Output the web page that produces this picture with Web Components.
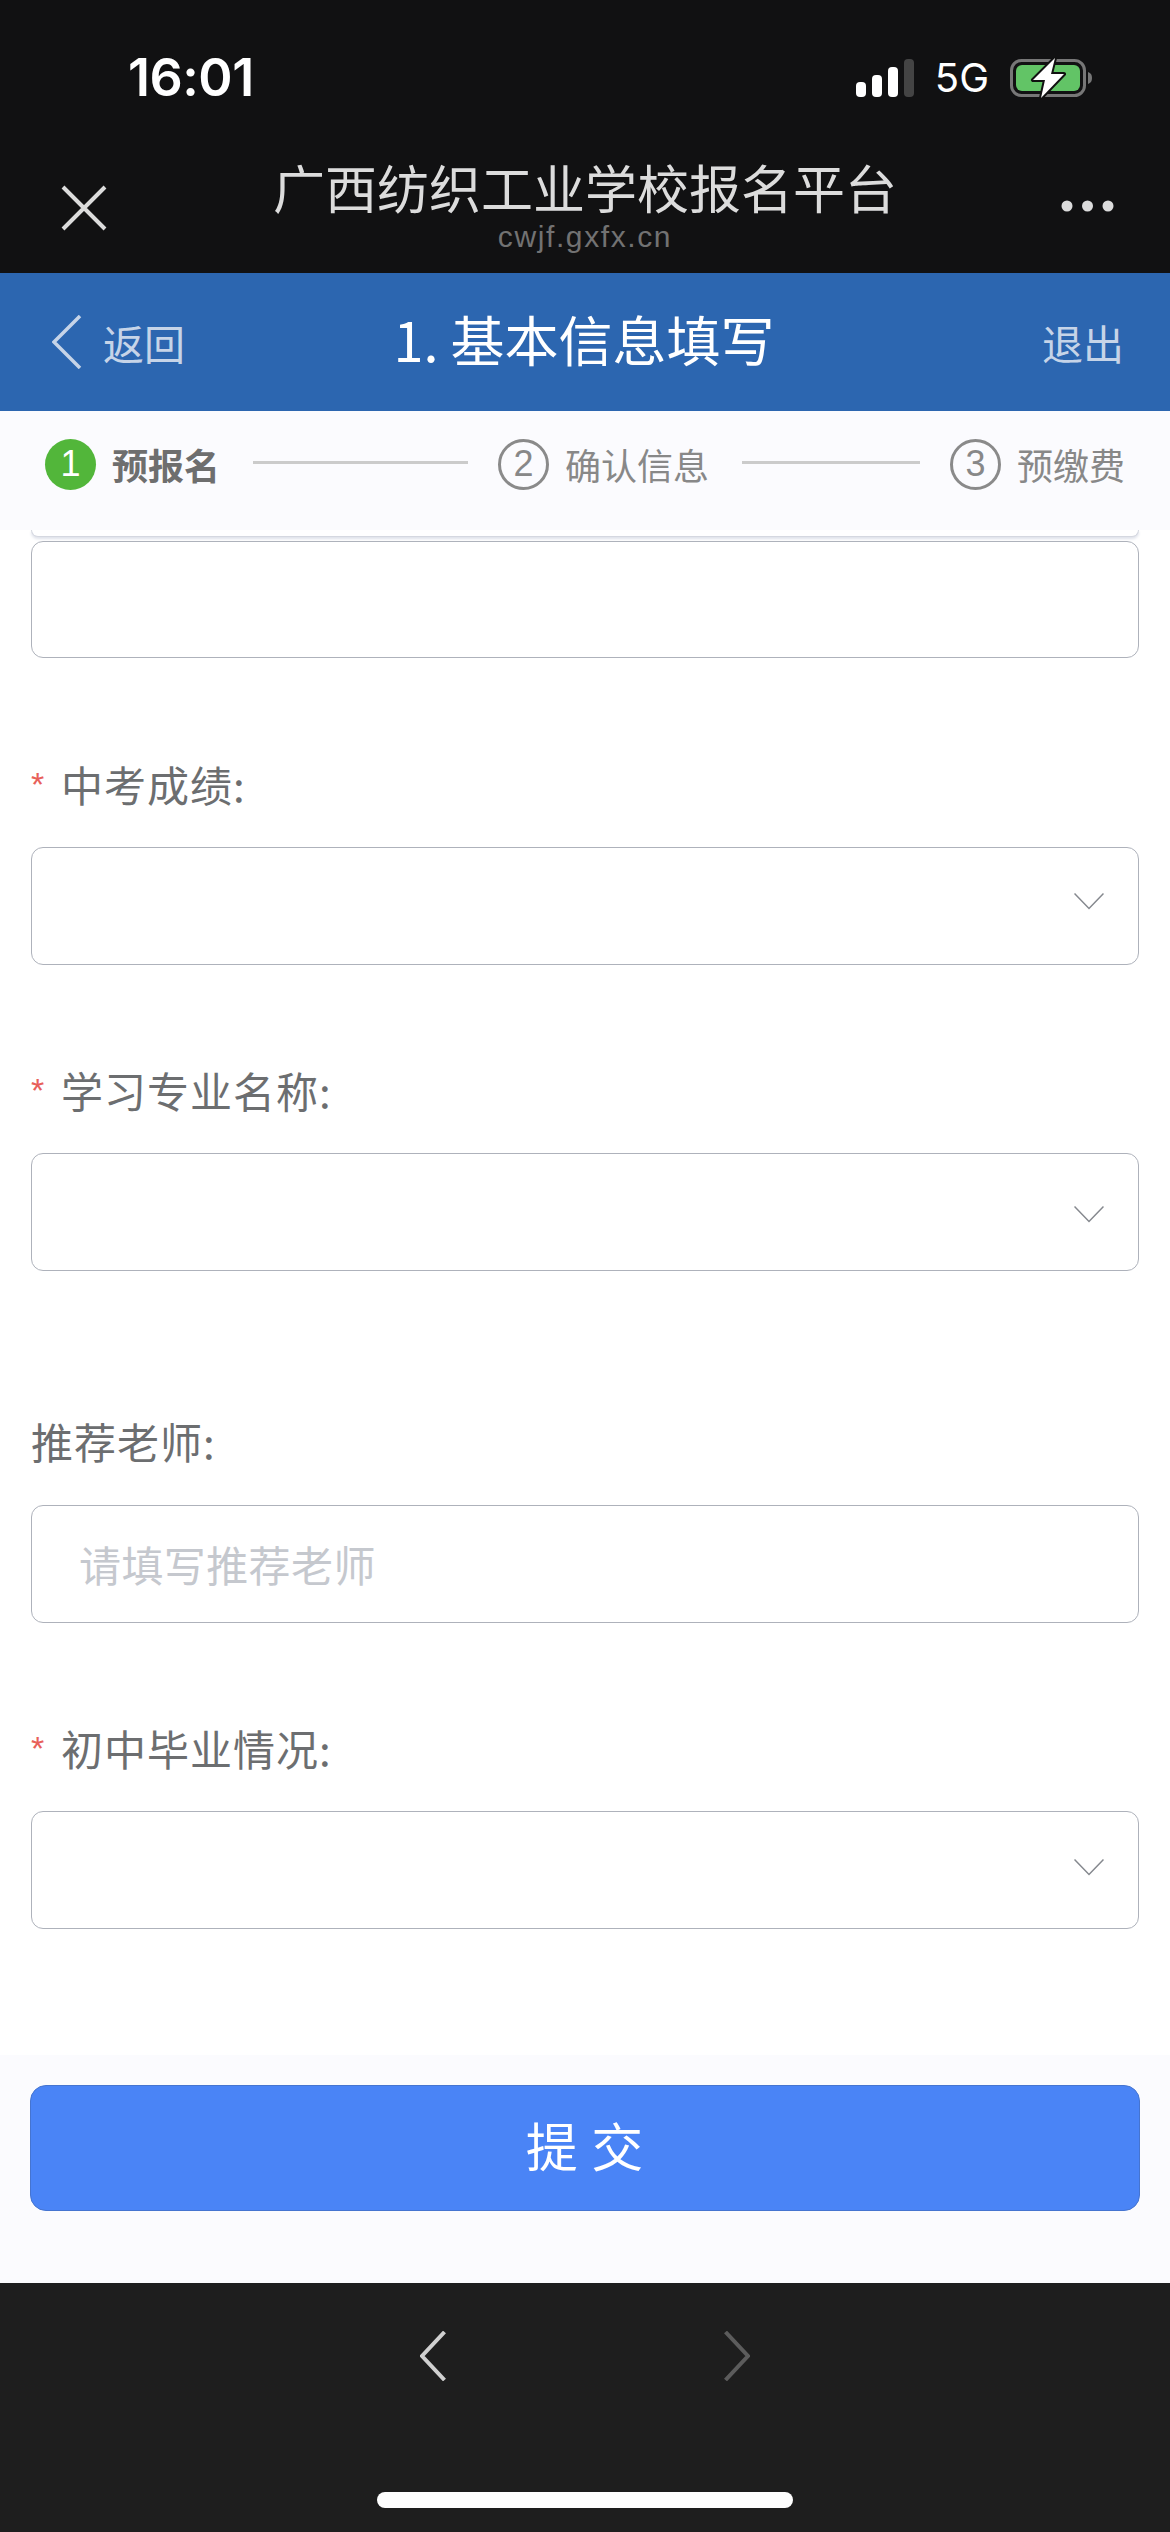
<!DOCTYPE html>
<html lang="zh">
<head>
<meta charset="utf-8">
<title>基本信息填写</title>
<style>
  html, body {
    margin: 0;
    padding: 0;
    background: #fff;
    font-family: "Liberation Sans", "Noto Sans CJK SC", sans-serif;
  }
  #app {
    display: flex;
    flex-direction: column;
    width: 1170px;
    height: 2532px;
    overflow: hidden;
  }
</style>
</head>
<body>
<div id="app">
  <status-bar time="16:01" network="5G"></status-bar>
  <wechat-nav title="广西纺织工业学校报名平台" url="cwjf.gxfx.cn"></wechat-nav>
  <page-header back="返回" title="1. 基本信息填写" action="退出"></page-header>
  <step-bar></step-bar>
  <form-page>
    <form-box clipped></form-box>
    <form-box style="margin-top:4px;height:117px"></form-box>
    <form-field label="中考成绩:" required select style="margin-top:98px;--label-gap:31px;--chevron-up:10px"></form-field>
    <form-field label="学习专业名称:" required select style="margin-top:97px;--label-gap:31px;--chevron-down:4px"></form-field>
    <form-field label="推荐老师:" placeholder="请填写推荐老师" style="margin-top:142px;--label-gap:32px"></form-field>
    <form-field label="初中毕业情况:" required select style="margin-top:97px;--label-gap:31px;--chevron-up:6px"></form-field>
  </form-page>
  <submit-bar>提 交</submit-bar>
  <browser-toolbar></browser-toolbar>
</div>

<script>
class StatusBar extends HTMLElement {
  connectedCallback() {
    this.attachShadow({ mode: 'open' });
    this.shadowRoot.innerHTML = `
      <style>
        :host {
          display: flex;
          flex: none;
          align-items: center;
          justify-content: space-between;
          height: 156px;
          padding: 0 78px 0 128px;
          background: #111112;
          color: #fff;
        }
        .time {
          font: 600 52px/1 Inter, "Liberation Sans", sans-serif;
          letter-spacing: -.5px;
        }
        .right {
          display: flex;
          align-items: center;
          gap: 21px;
        }
        .net {
          font: 400 40px/1 Inter, "Liberation Sans", sans-serif;
        }
        svg { display: block; }
      </style>
      <span class="time">${this.getAttribute('time')}</span>
      <div class="right">
        <svg width="58" height="38" viewBox="0 0 58 38">
          <rect x="0" y="23" width="10" height="15" rx="4" fill="#fff"/>
          <rect x="16" y="16" width="10" height="22" rx="4" fill="#fff"/>
          <rect x="32" y="8" width="10" height="30" rx="4" fill="#fff"/>
          <rect x="48" y="0" width="10" height="38" rx="4" fill="#444"/>
        </svg>
        <span class="net">${this.getAttribute('network')}</span>
        <svg width="82" height="42" viewBox="0 0 82 42">
          <rect x="1.500" y="3.500" width="73" height="35" rx="10" fill="none" stroke="#777" stroke-width="3"/>
          <rect x="6" y="8" width="64" height="26" rx="6" fill="#62c466"/>
          <path d="M78 15c3 1 4 3 4 6s-1 5-4 6z" fill="#777"/>
          <path d="M45 1 23 23h12l-4 18 23-24H41z" fill="#fff" stroke="#111" stroke-width="4" stroke-linejoin="round" paint-order="stroke"/>
        </svg>
      </div>
    `;
  }
}
customElements.define('status-bar', StatusBar);

class WechatNav extends HTMLElement {
  connectedCallback() {
    this.attachShadow({ mode: 'open' });
    this.shadowRoot.innerHTML = `
      <style>
        :host {
          display: grid;
          flex: none;
          grid-template-columns: 1fr auto 1fr;
          height: 117px;
          background: #111112;
        }
        .close { padding: 29px 0 0 61px; }
        .close svg, .more svg { display: block; }
        .center {
          display: flex;
          flex-direction: column;
          align-items: center;
          padding-top: 7px;
        }
        .title {
          font: 400 52px/56px "Liberation Sans", "Noto Sans CJK SC", sans-serif;
          color: #dcdcdc;
          white-space: nowrap;
        }
        .url {
          font: 400 30px/36px "Liberation Sans", sans-serif;
          letter-spacing: 1.6px;
          color: #727272;
        }
        .more {
          display: flex;
          justify-content: flex-end;
          padding: 44px 56px 0 0;
        }
      </style>
      <div class="close">
        <svg width="46" height="46" viewBox="0 0 46 46">
          <path d="M2 2l42 42M44 2 2 44" stroke="#dcdcdc" stroke-width="4" fill="none"/>
        </svg>
      </div>
      <div class="center">
        <div class="title">${this.getAttribute('title')}</div>
        <div class="url">${this.getAttribute('url')}</div>
      </div>
      <div class="more">
        <svg width="53" height="12" viewBox="0 0 53 12">
          <circle cx="6" cy="6" r="5.500" fill="#dcdcdc"/>
          <circle cx="26.500" cy="6" r="5.500" fill="#dcdcdc"/>
          <circle cx="47" cy="6" r="5.500" fill="#dcdcdc"/>
        </svg>
      </div>
    `;
  }
}
customElements.define('wechat-nav', WechatNav);

class PageHeader extends HTMLElement {
  connectedCallback() {
    this.attachShadow({ mode: 'open' });
    this.shadowRoot.innerHTML = `
      <style>
        :host {
          display: grid;
          flex: none;
          grid-template-columns: 1fr auto 1fr;
          align-items: center;
          height: 138px;
          padding: 0 46px 0 52px;
          box-sizing: border-box;
          background: #2c66b0;
          font-family: "Noto Sans CJK SC", sans-serif;
        }
        .back {
          display: flex;
          align-items: center;
          gap: 21px;
          color: #c6d4e8;
          font-size: 41px;
          line-height: 56px;
        }
        .back svg { display: block; }
        .title {
          margin: 0 8px 7px 0;
          color: #fff;
          font-size: 54px;
          line-height: 70px;
          white-space: nowrap;
        }
        .action {
          justify-self: end;
          color: #c6d4e8;
          font-size: 41px;
          line-height: 56px;
        }
      </style>
      <div class="back">
        <svg width="30" height="54" viewBox="0 0 30 54">
          <path d="M28 1 2 27l26 26" stroke="#c6d4e8" stroke-width="3.500" fill="none"/>
        </svg>
        <span>${this.getAttribute('back')}</span>
      </div>
      <div class="title">${this.getAttribute('title')}</div>
      <div class="action">${this.getAttribute('action')}</div>
    `;
  }
}
customElements.define('page-header', PageHeader);

class StepBar extends HTMLElement {
  connectedCallback() {
    this.attachShadow({ mode: 'open' });
    this.shadowRoot.innerHTML = `
      <style>
        :host {
          display: flex;
          flex: none;
          align-items: center;
          height: 119px;
          padding: 0 48px 13px 45px;
          box-sizing: border-box;
          background: #fbfbfe;
          font-family: "Noto Sans CJK SC", sans-serif;
          font-size: 36px;
          color: #888;
        }
        .num {
          display: flex;
          flex: none;
          align-items: center;
          justify-content: center;
          width: 51px;
          height: 51px;
          box-sizing: border-box;
          border: 3px solid #8a8a8a;
          border-radius: 50%;
          font: 400 36px/1 "Liberation Sans", sans-serif;
          color: #888;
        }
        .num.on {
          border: 0;
          background: #52b63a;
          color: #fff;
        }
        .name {
          margin-left: 16px;
          line-height: 50px;
          white-space: nowrap;
        }
        .name.on {
          font-weight: 700;
          color: #6e6e6e;
        }
        .line {
          flex: none;
          height: 3px;
          margin-top: -4px;
          background: #cbcbcb;
        }
      </style>
      <span class="num on">1</span><span class="name on">预报名</span>
      <span class="line" style="width:215px;margin-left:33px;margin-right:30px"></span>
      <span class="num">2</span><span class="name">确认信息</span>
      <span class="line" style="width:178px;margin-left:33px;margin-right:30px"></span>
      <span class="num">3</span><span class="name">预缴费</span>
    `;
  }
}
customElements.define('step-bar', StepBar);

class FormPage extends HTMLElement {
  connectedCallback() {
    this.attachShadow({ mode: 'open' });
    this.shadowRoot.innerHTML = `
      <style>
        :host {
          display: flex;
          flex: none;
          flex-direction: column;
          height: 1525px;
          padding: 0 31px;
          box-sizing: border-box;
          background: #fff;
          overflow: hidden;
        }
      </style>
      <slot></slot>
    `;
  }
}
customElements.define('form-page', FormPage);

class FormBox extends HTMLElement {
  connectedCallback() {
    this.attachShadow({ mode: 'open' });
    this.shadowRoot.innerHTML = `
      <style>
        :host {
          display: flex;
          flex: none;
          align-items: center;
          justify-content: space-between;
          height: 118px;
          padding: 0 34px 0 47px;
          box-sizing: border-box;
          border: 1px solid #aeb2bb;
          border-radius: 12px;
          background: #fff;
          font: 42px/1 "Noto Sans CJK SC", sans-serif;
          letter-spacing: .4px;
          color: #c5c8ce;
        }
        :host([clipped]) {
          height: 7px;
          border-top: 0;
          border-color: #d5d8e0;
          border-radius: 0 0 12px 12px;
          box-shadow: 0 2px 3px #dfe2ea;
        }
      </style>
      <slot></slot>
    `;
  }
}
customElements.define('form-box', FormBox);

class FormField extends HTMLElement {
  connectedCallback() {
    this.attachShadow({ mode: 'open' });
    const required = this.hasAttribute('required');
    const select = this.hasAttribute('select');
    this.shadowRoot.innerHTML = `
      <style>
        :host {
          display: block;
          flex: none;
          font-family: "Noto Sans CJK SC", sans-serif;
        }
        .label {
          display: flex;
          align-items: center;
          height: 60px;
          padding-bottom: 4px;
          box-sizing: border-box;
          margin-bottom: var(--label-gap, 30px);
          font-size: 42px;
          letter-spacing: 1px;
          line-height: 56px;
          color: #6c6e70;
        }
        .star {
          width: 30px;
          font: 34px/1 "Liberation Sans", sans-serif;
          color: #e8605a;
        }
        svg {
          display: block;
          margin: var(--chevron-down, 0) 0 var(--chevron-up, 0) auto;
        }
      </style>
      <div class="label">
        ${required ? '<span class="star">*</span>' : ''}
        <span>${this.getAttribute('label')}</span>
      </div>
      <form-box>
        <span>${this.getAttribute('placeholder') || ''}</span>
        ${select ? `<svg width="30" height="17" viewBox="0 0 30 17">
          <path d="M.5.5 15 15.500 29.500.5" stroke="#85888e" stroke-width="1.500" fill="none"/>
        </svg>` : ''}
      </form-box>
    `;
  }
}
customElements.define('form-field', FormField);

class SubmitBar extends HTMLElement {
  connectedCallback() {
    this.attachShadow({ mode: 'open' });
    this.shadowRoot.innerHTML = `
      <style>
        :host {
          display: block;
          flex: none;
          height: 228px;
          padding: 30px 30px 0;
          box-sizing: border-box;
          background: #fbfbfe;
        }
        button {
          display: block;
          width: 100%;
          height: 126px;
          padding: 0 0 6px;
          border: 1px solid #4574d0;
          border-radius: 16px;
          background: #4a84f6;
          color: #fff;
          font: 52px/1 "Noto Sans CJK SC", sans-serif;
          letter-spacing: 1px;
        }
      </style>
      <button type="button"><slot></slot></button>
    `;
  }
}
customElements.define('submit-bar', SubmitBar);

class BrowserToolbar extends HTMLElement {
  connectedCallback() {
    this.attachShadow({ mode: 'open' });
    this.shadowRoot.innerHTML = `
      <style>
        :host {
          display: flex;
          flex: 1;
          flex-direction: column;
          align-items: center;
          background: #1e1e1e;
        }
        .arrows {
          display: flex;
          gap: 278px;
          padding-top: 48px;
        }
        svg { display: block; }
        .home {
          width: 416px;
          height: 16px;
          margin-top: 111px;
          border-radius: 8px;
          background: #fff;
        }
      </style>
      <div class="arrows">
        <svg width="26" height="50" viewBox="0 0 26 50">
          <path d="M24.500 1 2 25l22.500 24" stroke="#d0d0d0" stroke-width="4" fill="none"/>
        </svg>
        <svg width="26" height="50" viewBox="0 0 26 50">
          <path d="M1.500 1 24 25 1.500 49" stroke="#5c5c5c" stroke-width="4" fill="none"/>
        </svg>
      </div>
      <div class="home"></div>
    `;
  }
}
customElements.define('browser-toolbar', BrowserToolbar);
</script>
</body>
</html>
